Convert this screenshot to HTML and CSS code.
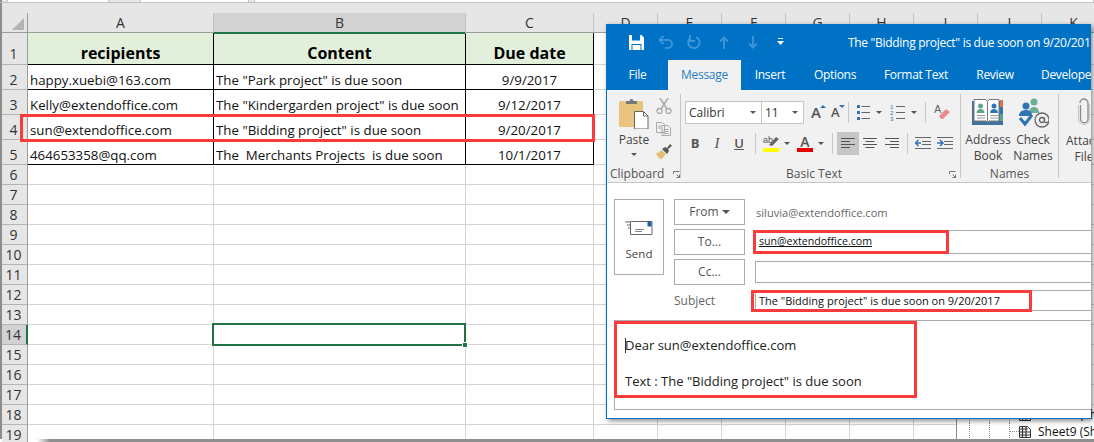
FILE: index.html
```html
<!DOCTYPE html>
<html lang="en">
<head>
<meta charset="utf-8">
<title>Mail merge</title>
<link rel="stylesheet" href="styles.css">
</head>
<body>
<div class="screen">
  <div class="topbar"><span class="fbox fb1"></span><span class="fbox fb2"></span><span class="fbox fb3"></span></div>
  <div class="sheet">
    <div class="row colhead">
      <div class="corner"><svg width="13" height="12" viewBox="0 0 13 12"><path d="M12 0v12H0z" fill="#b4b4b4"/></svg></div>
      <div>A</div><div class="sel">B</div><div>C</div><div>D</div><div>E</div><div>F</div><div>G</div><div>H</div><div>I</div><div>J</div><div>K</div>
    </div>
    <div class="row r1 data">
      <div class="rh">1</div><div class="hc">recipients</div><div class="hc">Content</div><div class="hc">Due date</div><div></div><div></div><div></div><div></div><div></div><div></div><div></div><div></div>
    </div>
    <div class="row r2 data">
      <div class="rh">2</div><div>happy.xuebi@163.com</div><div>The "Park project" is due soon</div><div class="dt">9/9/2017</div><div></div><div></div><div></div><div></div><div></div><div></div><div></div><div></div>
    </div>
    <div class="row r2 data">
      <div class="rh">3</div><div>Kelly@extendoffice.com</div><div>The "Kindergarden project" is due soon</div><div class="dt">9/12/2017</div><div></div><div></div><div></div><div></div><div></div><div></div><div></div><div></div>
    </div>
    <div class="row r2 data">
      <div class="rh">4</div><div>sun@extendoffice.com</div><div>The "Bidding project" is due soon</div><div class="dt">9/20/2017</div><div></div><div></div><div></div><div></div><div></div><div></div><div></div><div></div>
    </div>
    <div class="row r2 data">
      <div class="rh">5</div><div>464653358@qq.com</div><div>The&nbsp; Merchants Projects&nbsp; is due soon</div><div class="dt">10/1/2017</div><div></div><div></div><div></div><div></div><div></div><div></div><div></div><div></div>
    </div>
    <div class="row"><div class="rh">6</div><div></div><div></div><div></div><div></div><div></div><div></div><div></div><div></div><div></div><div></div><div></div></div>
    <div class="row"><div class="rh">7</div><div></div><div></div><div></div><div></div><div></div><div></div><div></div><div></div><div></div><div></div><div></div></div>
    <div class="row"><div class="rh">8</div><div></div><div></div><div></div><div></div><div></div><div></div><div></div><div></div><div></div><div></div><div></div></div>
    <div class="row"><div class="rh">9</div><div></div><div></div><div></div><div></div><div></div><div></div><div></div><div></div><div></div><div></div><div></div></div>
    <div class="row"><div class="rh">10</div><div></div><div></div><div></div><div></div><div></div><div></div><div></div><div></div><div></div><div></div><div></div></div>
    <div class="row"><div class="rh">11</div><div></div><div></div><div></div><div></div><div></div><div></div><div></div><div></div><div></div><div></div><div></div></div>
    <div class="row"><div class="rh">12</div><div></div><div></div><div></div><div></div><div></div><div></div><div></div><div></div><div></div><div></div><div></div></div>
    <div class="row"><div class="rh">13</div><div></div><div></div><div></div><div></div><div></div><div></div><div></div><div></div><div></div><div></div><div></div></div>
    <div class="row"><div class="rh rsel">14</div><div></div><div></div><div></div><div></div><div></div><div></div><div></div><div></div><div></div><div></div><div></div></div>
    <div class="row"><div class="rh">15</div><div></div><div></div><div></div><div></div><div></div><div></div><div></div><div></div><div></div><div></div><div></div></div>
    <div class="row"><div class="rh">16</div><div></div><div></div><div></div><div></div><div></div><div></div><div></div><div></div><div></div><div></div><div></div></div>
    <div class="row"><div class="rh">17</div><div></div><div></div><div></div><div></div><div></div><div></div><div></div><div></div><div></div><div></div><div></div></div>
    <div class="row"><div class="rh">18</div><div></div><div></div><div></div><div></div><div></div><div></div><div></div><div></div><div></div><div></div><div></div></div>
    <div class="row"><div class="rh">19</div><div></div><div></div><div></div><div></div><div></div><div></div><div></div><div></div><div></div><div></div><div></div></div>
  </div>

  <div class="selcell"><span class="handle"></span></div>
  <div class="redbox rb-row"></div>

  <div class="navpane">
    <div class="navline">
      <span class="dots"></span><span class="dots"></span><span class="dots last"></span>
      <svg class="sheeticon" width="15" height="15" viewBox="0 0 15 15"><path d="M1.500 2.500h8l3 3v8h-11z" fill="#fff" stroke="#333"/><path d="M1 5h9M1 8h11M1 11h11M4.500 2v11M8 2v11" stroke="#333" stroke-width="1.200"/></svg>
      <span class="navtext">Sheet8 (Sh</span>
    </div>
    <div class="navline">
      <span class="dots"></span><span class="dots"></span><span class="dots last"></span><span class="hdots"></span>
      <svg class="sheeticon" width="15" height="15" viewBox="0 0 15 15"><path d="M1.500 2.500h8l3 3v8h-11z" fill="#fff" stroke="#333"/><path d="M1 5h9M1 8h11M1 11h11M4.500 2v11M8 2v11" stroke="#333" stroke-width="1.200"/></svg>
      <span class="navtext">Sheet9 (Sh</span>
    </div>
  </div>

  <div class="window">
    <div class="titlebar">
      <div class="qat">
        <svg class="q-save" width="15" height="15" viewBox="0 0 15 15"><path d="M0 0h12.500L15 2.500V15H0z" fill="#fff"/><path d="M3 0h8v5.500H3zM2.500 9h10v6h-10z" fill="#0072c6"/><path d="M3.500 10h8v5h-8z" fill="#fff"/></svg>
        <svg class="q-ic" width="16" height="14" viewBox="0 0 16 14"><path d="M5.500 1 1.500 5l4 4M2 5h8a4 4 0 0 1 0 8H7" fill="none" stroke="#3d93d5" stroke-width="2"/></svg>
        <svg class="q-ic" width="14" height="14" viewBox="0 0 14 14"><path d="M9 2.100A5.700 5.700 0 1 1 4 2.500" fill="none" stroke="#3d93d5" stroke-width="2"/><path d="M3 0v6h5" fill="none" stroke="#3d93d5" stroke-width="2"/></svg>
        <svg class="q-ic" width="10" height="13" viewBox="0 0 10 13"><path d="M5 13V2M1 5.500l4-4 4 4" fill="none" stroke="#3d93d5" stroke-width="2"/></svg>
        <svg class="q-ic" width="10" height="13" viewBox="0 0 10 13"><path d="M5 0v11M1 7.500l4 4 4-4" fill="none" stroke="#3d93d5" stroke-width="2"/></svg>
        <svg class="q-more" width="7" height="8" viewBox="0 0 7 8"><path d="M1 .5h5" stroke="#fff"/><path d="M0 3h7L3.500 7z" fill="#fff"/></svg>
      </div>
      <div class="wintitle">The "Bidding project" is due soon on 9/20/2017</div>
    </div>
    <div class="tabs">
      <span class="tab t-file">File</span>
      <span class="tab t-msg">Message</span>
      <span class="tab t-ins">Insert</span>
      <span class="tab t-opt">Options</span>
      <span class="tab t-fmt">Format Text</span>
      <span class="tab t-rev">Review</span>
      <span class="tab t-dev">Developer</span>
    </div>
    <div class="ribbon">
      <section class="group g-clip">
        <div class="gbody clipbody">
          <div class="paste">
            <svg width="30" height="31" viewBox="0 0 30 31"><rect x="0" y="3" width="24" height="26" rx="1.500" fill="#e8c47e"/><path d="M7 6V3h3.500a2 2 0 0 1 4 0H18v3z" fill="#777"/><path d="M15.500 13.500h9l4.500 4.500v13h-13.500z" fill="#fff" stroke="#666"/><path d="M24.500 13.500V18H29" fill="none" stroke="#666"/></svg>
            <span class="plabel">Paste</span>
            <i class="caret"></i>
          </div>
          <div class="clipside">
            <svg width="16" height="16" viewBox="0 0 16 16"><path d="M4 0l7 11M12 0 5 11" stroke="#a9a9a9" stroke-width="1.500" fill="none"/><circle cx="3.500" cy="13" r="2.500" fill="none" stroke="#a9a9a9" stroke-width="1.300"/><circle cx="12.500" cy="13" r="2.500" fill="none" stroke="#a9a9a9" stroke-width="1.300"/></svg>
            <svg width="15" height="14" viewBox="0 0 15 14"><path d="M.5.500h6l2 2v8H.5zM6 3.500h6l2.500 2.500v7.500H6z" fill="#f1f1f1" stroke="#a9a9a9"/><path d="M2 4h3M2 6h3M7.500 7.500h5M7.500 9.500h5M7.500 11.500h5" stroke="#a9a9a9"/></svg>
            <svg width="16" height="15" viewBox="0 0 16 15"><path d="M0 9c3 0 4-1 5-3l5 4c-2 2-3 4-4 5-3 0-5-3-6-6z" fill="#e3bd72"/><path d="M6 5l3-2 2 1 3-4 2 2-4 3 1 2-2 3z" fill="#5a5a5a"/></svg>
          </div>
        </div>
        <div class="glabel lb-clip"><span>Clipboard</span><svg class="launch" width="7" height="7" viewBox="0 0 7 7"><path d="M.5 3V.5H6.500M3.500 3.500 6.500 6.500M6.500 3.500v3h-3" fill="none" stroke="#777"/></svg></div>
      </section>

      <section class="group g-text">
        <div class="gbody textbody">
          <div class="trow tr1">
            <div class="combo c-font"><span>Calibri</span><i class="caret"></i></div>
            <div class="combo c-size"><span>11</span><i class="caret"></i></div>
            <span class="growa g1">A<i class="tri up"></i></span>
            <span class="growa g2">A<i class="tri dn"></i></span>
            <span class="rsep s1"></span>
            <svg class="list l1" width="14" height="17" viewBox="0 0 14 17"><path d="M1 2.500h3M1 8.500h3M1 14.500h3" stroke="#2e75b6" stroke-width="3"/><path d="M5.500 2.500H14M5.500 8.500H14M5.500 14.500H14" stroke="#666"/></svg>
            <i class="caret c-l1"></i>
            <svg class="list l2" width="15" height="17" viewBox="0 0 15 17"><text x="0" y="5" class="numtxt">1</text><text x="0" y="11" class="numtxt">2</text><text x="0" y="17" class="numtxt">3</text><path d="M6 2.500h9M6 8.500h9M6 14.500h9" stroke="#666"/></svg>
            <i class="caret c-l2"></i>
            <span class="rsep s2"></span>
            <svg class="eraser" width="16" height="19" viewBox="0 0 16 19"><text x="0" y="10" class="erasetxt">A</text><path d="M5 13l7-7 4 3-7 7H7z" fill="#ee8a94"/></svg>
          </div>
          <div class="trow tr2">
            <span class="fb b">B</span><span class="fb i">I</span><span class="fb u">U</span>
            <span class="rsep s3"></span>
            <svg class="hl" width="16" height="17" viewBox="0 0 16 17"><text x="0" y="8" class="abtxt">ab</text><path d="M6 10l7-8 3 2-7 7z" fill="#666"/><rect y="13" width="16" height="4" fill="#ff0"/></svg>
            <i class="caret c-hl"></i>
            <span class="fcolor">A<i></i></span>
            <i class="caret c-fc"></i>
            <span class="rsep s4"></span>
            <span class="alignbtn on"><svg width="14" height="11" viewBox="0 0 14 11"><path d="M0 .5h14M0 3.500h9M0 6.500h14M0 9.500h9" stroke="#555"/></svg></span>
            <span class="alignbtn"><svg width="14" height="11" viewBox="0 0 14 11"><path d="M0 .5h14M2.500 3.500h9M0 6.500h14M2.500 9.500h9" stroke="#555"/></svg></span>
            <span class="alignbtn"><svg width="14" height="11" viewBox="0 0 14 11"><path d="M0 .5h14M5 3.500h9M0 6.500h14M5 9.500h9" stroke="#555"/></svg></span>
            <span class="rsep s5"></span>
            <svg class="ind i1" width="16" height="12" viewBox="0 0 16 12"><path d="M0 .5h16M7 4.500h9M7 7.500h9M0 11.500h16" stroke="#666"/><path d="M6 6H1M3.500 3 .5 6l3 3" fill="none" stroke="#2e75b6" stroke-width="1.500"/></svg>
            <svg class="ind i2" width="16" height="12" viewBox="0 0 16 12"><path d="M0 .5h16M7 4.500h9M7 7.500h9M0 11.500h16" stroke="#666"/><path d="M0 6h5M3 3l3 3-3 3" fill="none" stroke="#2e75b6" stroke-width="1.500"/></svg>
          </div>
        </div>
        <div class="glabel lb-text"><span>Basic Text</span><svg class="launch" width="7" height="7" viewBox="0 0 7 7"><path d="M.5 3V.5H6.500M3.500 3.500 6.500 6.500M6.500 3.500v3h-3" fill="none" stroke="#777"/></svg></div>
      </section>

      <section class="group g-names">
        <div class="gbody namesbody">
          <div class="bigbtn b-addr">
            <svg width="32" height="26" viewBox="0 0 32 26"><path d="M0 2h31v24H0z" fill="#41719c"/><path d="M28 1h3v7h-3z" fill="#d9734a"/><path d="M28 8h3v7h-3z" fill="#2e75b6"/><path d="M28 15h3v7h-3z" fill="#5fa58d"/><path d="M2 .5h12l1.500 2 1.500-2h10v21.500H17l-1.500 1-1.500-1H2z" fill="#fff" stroke="#777"/><path d="M15.500 3v19" stroke="#777"/><circle cx="8.500" cy="7" r="2.500" fill="#5fa58d"/><path d="M4.500 14c0-3 2-4 4-4s4 1 4 4z" fill="#5fa58d"/><circle cx="22" cy="7" r="2.500" fill="#2e75b6"/><path d="M18 14c0-3 2-4 4-4s4 1 4 4z" fill="#2e75b6"/><path d="M5 16.500h8M5 19h8M18.500 16.500h8M18.500 19h8" stroke="#999"/></svg>
            <span>Address<br>Book</span>
          </div>
          <div class="bigbtn b-check">
            <svg width="31" height="30" viewBox="0 0 31 30"><circle cx="16" cy="4" r="3.500" fill="#6fae98"/><path d="M11 15c0-4 2-6 5-6s5 2 5 6z" fill="#6fae98"/><circle cx="8" cy="8" r="3.500" fill="#2e75b6"/><path d="M1 18c0-4 3-6 7-6s6 2 6 6z" fill="#2e75b6"/><path d="M2 20l5 6 7-9" fill="none" stroke="#2e75b6" stroke-width="3"/><circle cx="24" cy="22" r="7" fill="#f1f1f1" stroke="#666" stroke-width="1.300"/><circle cx="24" cy="22" r="2.500" fill="none" stroke="#666" stroke-width="1.300"/><path d="M26.500 19.500v4c0 1.500 2.500 1.500 3 0" fill="none" stroke="#666" stroke-width="1.200"/></svg>
            <span>Check<br>Names</span>
          </div>
        </div>
        <div class="glabel lb-names"><span>Names</span></div>
      </section>

      <section class="group g-incl">
        <div class="gbody inclbody">
          <div class="bigbtn b-att">
            <svg width="12" height="28" viewBox="0 0 12 28"><path d="M2.500 7v14a3.700 3.700 0 0 0 7.500 0V5a4 4 0 0 0-8 0" fill="none" stroke="#8a8a8a" stroke-width="1.300"/><path d="M.5 7v14a5.500 5.500 0 0 0 11 0V6" fill="none" stroke="#c4c4c4"/></svg>
            <span>Attach<br>File</span>
          </div>
        </div>
      </section>
    </div>

    <div class="compose">
      <div class="sendcol">
        <button class="sendbtn" type="button">
          <svg width="28" height="16" viewBox="0 0 28 16"><path d="M0 2h5M2 5h3M3 8h2" stroke="#666"/><path d="M5.500 1.500h21.500v13H5.500z" fill="#fff" stroke="#666"/><path d="M10 9.500h9M10 11.500h7" stroke="#8a8a8a"/><rect x="22.500" y="1.500" width="4" height="5" fill="#1f5f9f"/></svg>
          <span>Send</span>
        </button>
      </div>
      <div class="fields">
        <div class="frow f-from"><span class="fbtn">From <i class="from-caret"></i></span><span class="faddr">siluvia@extendoffice.com</span></div>
        <div class="frow f-to"><span class="fbtn">To...</span><span class="finput"><u>sun@extendoffice.com</u></span></div>
        <div class="frow f-cc"><span class="fbtn">Cc...</span><span class="finput"></span></div>
        <div class="frow f-subj"><span class="flabel">Subject</span><span class="finput sj">The "Bidding project" is due soon on 9/20/2017</span></div>
      </div>
    </div>
    <div class="mailbody">
      <p class="m1"><i class="cursor"></i>Dear sun@extendoffice.com</p>
      <p class="m2">Text : The "Bidding project" is due soon</p>
    </div>
  </div>

  <div class="redbox rb-to"></div>
  <div class="redbox rb-subj"></div>
  <div class="redbox rb-body"></div>
  <div class="bottomband"></div>
</div>
</body>
</html>
```
FILE: styles.css
```css
*{box-sizing:border-box}
html,body{margin:0;padding:0}
body{width:1094px;height:442px;overflow:hidden;background:#fff;font-family:"Open Sans","Noto Sans",sans-serif;color:#000}
.screen{position:relative;width:1094px;height:442px;overflow:hidden;padding-left:2px}
.screen::before{content:"";position:absolute;left:0;top:0;bottom:3px;width:2px;background:#8c8c8c}
.topbar{height:13px;background:#e6e6e6;position:relative;display:flex}
.topbar::before{content:"";position:absolute;left:-2px;right:0;top:2px;height:1px;background:#bdbdbd}
.fbox{display:block;height:3px;background:#fff;border:1px solid #c4c4c4;border-top:0;position:relative}
.fb1{width:102px;margin-left:5px}
.fb2{width:109px;margin-left:31px}
.fb3{width:841px;margin-left:5px}
.row{display:grid;grid-template-columns:26px 186px 252px 128px repeat(8,64px);height:20px}
.row>div{border-right:1px solid #d4d4d4;border-bottom:1px solid #d4d4d4;font-size:13.300px;line-height:18px;white-space:nowrap;overflow:hidden}
.row>.rh{background:#e6e6e6;border-right:1px solid #9c9c9c;border-bottom:1px solid #b4b4b4;text-align:center;color:#333;font-size:14px;line-height:19px;padding-right:2px}
.colhead>div{background:#e6e6e6;border-bottom:1px solid #9c9c9c;border-right:1px solid #c4c4c4;text-align:center;color:#333;line-height:19px;font-size:14px}
.colhead>.corner{padding:5px 0 0 10px;text-align:left;border-right-color:#9c9c9c}
.corner svg{display:block}
.colhead>.sel{background:#d2d2d2;border-bottom:2px solid #217346;margin-bottom:-1px;height:21px;position:relative}
.row>.rsel{background:#d2d2d2;border-right:2px solid #217346}
.r1{height:32px}
.r2{height:25px}
.data>div:nth-child(2),.data>div:nth-child(3),.data>div:nth-child(4){border-right-color:#000;border-bottom-color:#000;padding:6px 2px 0 2px;color:#111}
.data>.rh{line-height:42px}
.r2>.rh{line-height:30px}
.data>.hc{background:#e2efda;text-align:center;font-weight:700;font-size:16px;line-height:22px}
.data>.hc:nth-child(n){padding-top:9px;color:#000}
.data>.dt{text-align:center}
.selcell{position:absolute;left:212px;top:323px;width:254px;height:23px;border:2px solid #217346}
.handle{position:absolute;right:-4px;bottom:-4px;width:6px;height:6px;background:#217346;border:1px solid #fff}
.redbox{position:absolute;border:3px solid #f93b3b;pointer-events:none}
.rb-row{left:20px;top:114px;width:575px;height:28px}
.rb-to{left:753px;top:230px;width:196px;height:24px}
.rb-subj{left:751px;top:290px;width:281px;height:22px}
.rb-body{left:614px;top:321px;width:303px;height:77px}
.navpane{position:absolute;left:956px;top:406px;width:138px;height:33px;background:#fff;border-left:1px solid #8c8c8c}
.navline{display:flex;align-items:center;height:17px;font-size:12px;white-space:nowrap;color:#111}
.dots{display:block;flex:none;width:1px;height:17px;border-left:1px dotted #888;margin-right:19px}
.dots:first-child{margin-left:12px}
.dots.last{margin-right:0}
.hdots{display:block;flex:none;width:9px;border-top:1px dotted #888}
.sheeticon{flex:none;margin-left:-1px}
.navline:first-child .sheeticon{margin-left:8px}
.navtext{margin-left:5px}
.window{position:absolute;left:606px;top:24px;width:485px;height:395px;background:#fff;border:1px solid #0072c6;border-top:0;border-right:0;box-shadow:2px 2px 5px rgba(0,0,0,.45);overflow:hidden}
.titlebar{height:36px;background:#0072c6;display:flex;align-items:center}
.qat{display:flex;align-items:center;width:241px;flex:none;padding-left:22px}
.q-save{margin-right:14px}
.q-ic:nth-child(2){margin-right:13px}
.q-ic:nth-child(3){margin-right:18px}
.q-ic:nth-child(4){margin-right:19px}
.q-ic:nth-child(5){margin-right:19px}
.wintitle{color:#fff;font-size:12px;letter-spacing:-.3px;white-space:nowrap;flex:none}
.tabs{height:30px;background:#0072c6;display:flex;align-items:center;font-size:12px;letter-spacing:-.3px;color:#fff;white-space:nowrap}
.tab{display:block;line-height:30px;text-align:center;flex:none}
.t-file{width:61px}
.t-msg{width:73px;background:#f1f1f1;color:#2a7dc4}
.t-ins{width:58px}
.t-opt{width:72px}
.t-fmt{width:90px}
.t-rev{width:68px}
.t-dev{margin-left:12px}
.ribbon{height:93px;background:#f1f1f1;border-bottom:1px solid #c6c6c6;display:flex;color:#444;font-size:12px;padding-top:4px}
.group{display:flex;flex-direction:column;height:84px;border-right:1px solid #c6c6c6;flex:none}
.gbody{height:73px;flex:none;position:relative}
.glabel{display:flex;align-items:center;flex:none;font-size:12px;line-height:14px;color:#555;position:relative;white-space:nowrap}
.launch{flex:none}
.g-clip{width:74px}
.clipbody{display:flex;padding:4px 0 0 12px}
.paste{width:30px;display:flex;flex-direction:column;align-items:center}
.plabel{line-height:16px;margin-top:3px;color:#444}
.caret{display:block;width:0;height:0;border-left:3px solid transparent;border-right:3px solid transparent;border-top:3px solid #555}
.paste .caret{margin-top:5px}
.clipside{display:flex;flex-direction:column;gap:8px;margin-left:7px}
.lb-clip{padding-left:3px;gap:9px}
.g-text{width:280px}
.textbody{padding:7px 0 0 4px}
.trow{display:flex;align-items:center}
.tr1{height:22px}
.tr2{height:24px;margin-top:8px}
.combo{height:23px;background:#fff;border:1px solid #c6c6c6;display:flex;align-items:center;justify-content:space-between;padding:0 5px 0 3px;font-size:12px;color:#333}
.c-font{width:77px}
.c-size{width:43px;margin-left:-1px}
.growa{position:relative;font-size:14px;font-weight:600;color:#555;line-height:22px}
.g1{margin-left:7px;font-size:15px}
.g2{margin-left:10px;font-size:13px}
.tri{position:absolute;right:-5px;top:4px;width:0;height:0;border-left:3px solid transparent;border-right:3px solid transparent}
.tri.up{border-bottom:3px solid #2e75b6}
.tri.dn{border-top:3px solid #2e75b6}
.rsep{display:block;width:1px;height:21px;background:#c6c6c6;flex:none}
.s1{margin-left:8px}
.list{flex:none}
.l1{margin-left:7px}
.c-l1{margin:0 0 0 6px}
.l2{margin-left:8px}
.c-l2{margin-left:6px}
.s2{margin-left:8px}
.eraser{margin-left:8px}
.numtxt{font:6px "Liberation Sans",sans-serif;fill:#2e75b6}
.erasetxt{font:11px "Liberation Sans",sans-serif;fill:#666}
.abtxt{font:9px "Liberation Sans",sans-serif;fill:#555}
.fb{display:block;width:22px;text-align:center;font-size:13px;color:#555;line-height:22px}
.fb.b{font-weight:700;margin-left:-1px}
.fb.i{font-style:italic;font-family:"Liberation Serif",serif;font-size:15px}
.fb.u{text-decoration:underline;font-weight:600}
.s3{margin-left:5px}
.hl{margin-left:7px;flex:none}
.c-hl{margin-left:5px}
.fcolor{display:flex;flex-direction:column;align-items:center;width:16px;margin-left:7px;font-size:14px;font-weight:600;line-height:13px;color:#555}
.fcolor i{display:block;width:16px;height:4px;background:#e60000}
.c-fc{margin-left:5px}
.s4{margin-left:8px;margin-right:4px}
.alignbtn{width:22px;height:23px;display:flex;align-items:center;justify-content:center}
.alignbtn.on{background:#c6c6c6}
.s5{margin-left:4px}
.ind{flex:none}
.i1{margin-left:7px}
.i2{margin-left:6px}
.lb-text{padding-left:105px}
.lb-text .launch{margin-left:auto;margin-right:4px}
.g-names{width:98px}
.namesbody{display:flex;padding:5px 0 0 0}
.bigbtn{display:flex;flex-direction:column;align-items:center;color:#444;font-size:12px;line-height:16px;text-align:center}
.bigbtn svg{display:block;flex:none}
.bigbtn span{display:block;white-space:nowrap}
.b-addr{width:54px}
.b-addr span{margin-top:7px}
.b-check{width:36px;margin-top:-1px}
.b-check span{margin-top:4px}
.lb-names{justify-content:center}
.g-incl{border-right:0;flex:1}
.inclbody{padding-top:3px}
.b-att{width:46px;margin-left:2px}
.b-att svg{margin-top:1px}
.b-att span{margin-top:7px}
.compose{display:flex;height:137px;padding:16px 0 0 7px}
.sendbtn{width:50px;height:76px;background:#fff;border:1px solid #ababab;display:flex;flex-direction:column;align-items:center;padding:20px 0 0;font:11.500px "Open Sans",sans-serif;color:#444}
.sendbtn span{margin-top:10px}
.fields{margin-left:10px;display:flex;flex-direction:column;gap:4px;flex:1}
.frow{display:flex;align-items:center;height:26px;font-size:12px}
.fbtn{display:block;width:71px;height:26px;border:1px solid #ababab;text-align:center;line-height:24px;color:#555;flex:none}
.from-caret{display:inline-block;width:0;height:0;border-left:4px solid transparent;border-right:4px solid transparent;border-top:4px solid #555;vertical-align:2px}
.faddr{margin-left:11px;color:#666;font-size:11.100px}
.finput{display:block;margin-left:10px;height:24px;flex:1;border:1px solid #ababab;border-right:0;padding-left:3px;line-height:20px;color:#111;font-size:10.600px;white-space:nowrap}
.f-cc .finput{height:22px}
.f-subj{height:22px}
.flabel{display:block;width:71px;color:#666;flex:none}
.finput.sj{height:21px;font-size:11px}
.mailbody{margin-left:7px;height:90px;border:1px solid #ababab;border-right:0;padding:15px 0 0 10px;font-size:13px;color:#222}
.mailbody p{margin:0;line-height:18px;position:relative}
.mailbody .m2{margin-top:18px}
.cursor{position:absolute;left:0;top:2px;width:1px;height:15px;background:#333}
.bottomband{position:absolute;left:37px;right:0;bottom:0;height:3px;background:linear-gradient(90deg,#fff,#8f8f8f 13px)}
```
